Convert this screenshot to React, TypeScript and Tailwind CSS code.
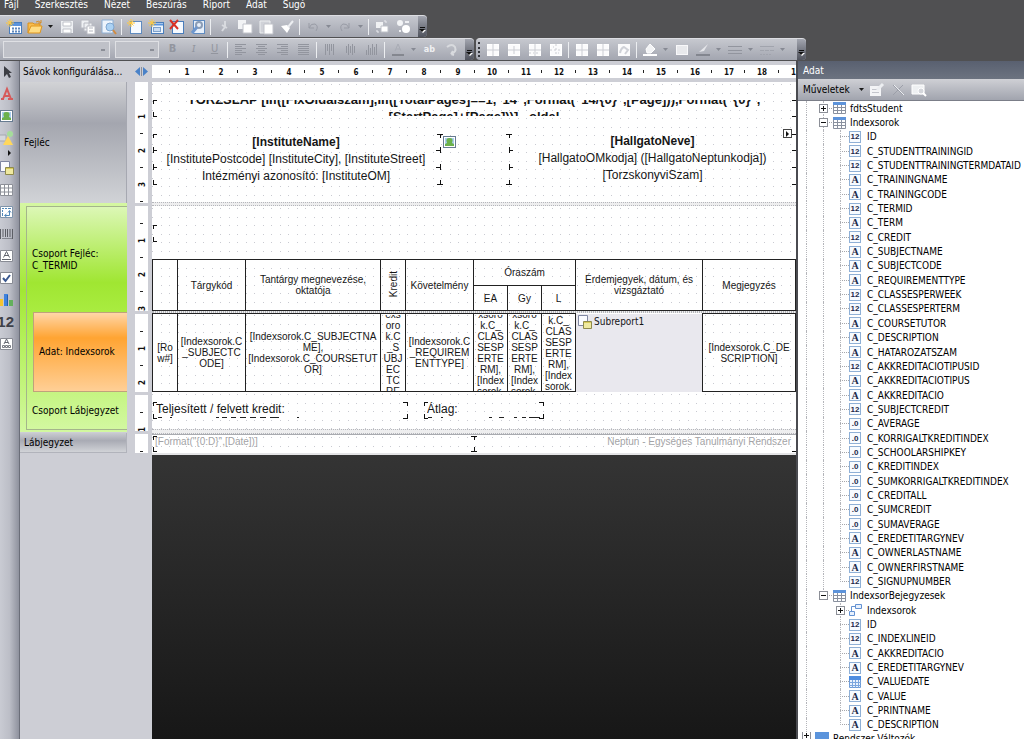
import type { ReactNode } from "react"

const ui = "font-['DejaVu_Sans_Condensed',Tahoma,sans-serif]"

const Svg = ({ children, size = 16 }: { children: ReactNode; size?: number }) => (
    <svg width={size} height={size} viewBox="0 0 16 16" fill="none" className="shrink-0">
        {children}
    </svg>
)

const Lines = ({ rows }: { rows: number[][] }) => (
    <Svg>
        {rows.map(([x, w], i) => (
            <rect key={i} x={x} y={2 + i * 2} width={w} height={1} fill="#92959e" />
        ))}
    </Svg>
)

const BorderGrid = ({ inner }: { inner: string }) => (
    <Svg>
        <rect x="2.5" y="2.5" width="11" height="11" fill="#fbfbfc" stroke="#fff" />
        <path d={inner} stroke="#cbcdd3" />
    </Svg>
)

const star = <path d="M4 0v8M0 4h8M1.5 1.5l5 5M6.5 1.5l-5 5" stroke="#ffc83d" />

const icons: Record<string, ReactNode> = {
    newReport: (
        <Svg>
            <rect x="3.5" y="3.5" width="12" height="11" fill="#fff" stroke="#4a7dbb" />
            <path d="M4 5.5h11" stroke="#5b94dc" strokeWidth="3" />
            <path d="M6 9.5h2M9 9.5h2M12 9.5h2M6 12.5h2M9 12.5h2M12 12.5h2" stroke="#5f88bd" strokeWidth="2" />
            {star}
        </Svg>
    ),
    open: (
        <Svg>
            <path d="M1 14V4h5l1 1h6v3" fill="#f7bd4f" stroke="#dc901b" />
            <path d="M1 14l3-7h11l-2 7z" fill="#ffdc82" stroke="#df951e" />
            <path d="M9 3q3-2 5 1m0-3v3h-3" stroke="#d68b20" />
        </Svg>
    ),
    save: (
        <Svg>
            <path d="M2 2h12v12H2z" fill="#eef0f3" />
            <path d="M4 3h8v4H4zM4 10h8v4H4z" fill="#fff" stroke="#bfc2c9" />
        </Svg>
    ),
    saveAll: (
        <Svg>
            <path d="M1 1h8v8H1zM4 4h8v8H4z" fill="#eef0f3" stroke="#b8bac2" />
            <path d="M7 7h8v8H7z" fill="#fff" stroke="#b8bac2" />
            <path d="M9 9h4M9 12h4" stroke="#b3b6bf" />
        </Svg>
    ),
    preview: (
        <Svg>
            <path d="M1 1h11v13H1z" fill="#edf4fc" stroke="#8eafd4" />
            <circle cx="9" cy="8" r="4" fill="#abd2f4" stroke="#7fa6d0" />
            <path d="M12 11l3 4" stroke="#d18b41" strokeWidth="2" />
        </Svg>
    ),
    newPage: (
        <Svg>
            <rect x="3.5" y="2.5" width="11" height="12" fill="#f6faff" stroke="#5f8bc0" />
            {star}
        </Svg>
    ),
    newForm: (
        <Svg>
            <rect x="3.5" y="3.5" width="12" height="11" fill="#eef5fd" stroke="#4a7dbb" />
            <path d="M4 5.5h11" stroke="#5b94dc" strokeWidth="2" />
            <rect x="5.5" y="8.5" width="7" height="4" fill="#c8dbf1" stroke="#7fa2cc" />
            {star}
        </Svg>
    ),
    deletePage: (
        <Svg>
            <rect x="3.5" y="2.5" width="11" height="12" fill="#f6faff" stroke="#4a7dbb" />
            <path d="M1 1l8 9M9 1L1 10" stroke="#d93025" strokeWidth="2" />
        </Svg>
    ),
    pageSetup: (
        <Svg>
            <rect x="3.5" y="1.5" width="11" height="13" fill="#e7f0fb" stroke="#5f8bc0" />
            <circle cx="9" cy="6" r="3" stroke="#8b9db6" strokeWidth="2" />
            <path d="M7 8l-5 6" stroke="#6d97cf" strokeWidth="3" />
        </Svg>
    ),
    cut: (
        <Svg>
            <path d="M9 2v6l-3 4M6 6l5 3" stroke="#d8dadf" strokeWidth="2" />
        </Svg>
    ),
    copy: (
        <Svg>
            <path d="M1 1h8v9H1z" fill="#f2f3f5" />
            <path d="M6 5h9v9H6z" fill="#fff" stroke="#c1c3ca" />
        </Svg>
    ),
    paste: (
        <Svg>
            <path d="M2 2h10v12H2z" fill="#d0d2d8" stroke="#eceef0" />
            <path d="M6 5h9v10H6z" fill="#fff" stroke="#c1c3ca" />
        </Svg>
    ),
    brush: (
        <Svg>
            <path d="M2 7l6-1 3 3-3 5z" fill="#fff" />
            <path d="M9 8l5-6" stroke="#eceef1" strokeWidth="2" />
        </Svg>
    ),
    undo: (
        <Svg>
            <path d="M4 4v5h5M4 9q2-5 6-4 4 2 1 7" stroke="#989ba5" />
        </Svg>
    ),
    redo: (
        <Svg>
            <path d="M12 4v5H7M12 9q-2-5-6-4-4 2-1 7" stroke="#989ba5" />
        </Svg>
    ),
    group: (
        <Svg>
            <path d="M2 3h7v6H2z" fill="#f0f1f3" />
            <path d="M7 7h7v6H7z" fill="#fff" stroke="#bdc0c7" />
            <path d="M10 2h2v2M3 11v2h2" stroke="#e9eaee" />
        </Svg>
    ),
    ungroup: (
        <Svg>
            <circle cx="5" cy="4" r="3" fill="#f3f4f6" />
            <circle cx="11" cy="10" r="4" fill="#fff" />
            <path d="M10 3h4M4 12h2" stroke="#eeeff2" strokeWidth="2" />
        </Svg>
    ),
    alignLeft: <Lines rows={[[2, 11], [2, 7], [2, 11], [2, 7], [2, 11], [2, 7]]} />,
    alignCenter: <Lines rows={[[2, 11], [4, 7], [2, 11], [4, 7], [2, 11], [4, 7]]} />,
    alignRight: <Lines rows={[[2, 11], [6, 7], [2, 11], [6, 7], [2, 11], [6, 7]]} />,
    justify: <Lines rows={[[2, 11], [2, 11], [2, 11], [2, 11], [2, 11], [2, 11]]} />,
    vTop: (
        <Svg>
            <path d="M3.5 2v11M5.5 2v7M7.5 2v11M9.5 2v7M11.5 2v11" stroke="#92959e" />
        </Svg>
    ),
    vMiddle: (
        <Svg>
            <path d="M3.5 4v7M5.5 2v11M7.5 4v7M9.5 2v11M11.5 4v7" stroke="#92959e" />
        </Svg>
    ),
    vBottom: (
        <Svg>
            <path d="M2.5 8v5M4.5 3v10M6.5 6v7M8.5 2v11M10.5 5v8M12.5 2v11" stroke="#92959e" />
        </Svg>
    ),
    fontColor: (
        <Svg>
            <path d="M5 9l3-7 3 7M6 7h4" stroke="#a9acb5" />
            <path d="M2 12h12v2H2z" fill="#84878f" />
        </Svg>
    ),
    rotate: (
        <Svg>
            <path d="M4 5q5-4 8 0 2 5-4 7m0 0l3 1m-3-1l2-3" stroke="#d8dade" strokeWidth="2" />
        </Svg>
    ),
    bAll: <BorderGrid inner="M8 2v12M2 8h12" />,
    bTop: <BorderGrid inner="M8 4v8M2 8h12" />,
    bDash: <BorderGrid inner="M2 8h12M8 2v12M2 11h2m2 0h1m2 0h2" />,
    bNone: <BorderGrid inner="M2 8h2m2 0h2m2 0h2M8 2v2m0 2v2m0 2v2M5 5h1M10 11h1" />,
    bSetup: (
        <Svg>
            <rect x="2" y="2" width="12" height="12" fill="#fbfbfc" />
            <path d="M4 11q1-5 4-6l4 3-3 4" stroke="#cfd1d7" strokeWidth="2" />
        </Svg>
    ),
    fill: (
        <Svg>
            <path d="M4 7l4-5 5 5-4 4H5z" fill="#f2f3f5" stroke="#fff" />
            <path d="M1 12h14v2H1z" fill="#fff" />
        </Svg>
    ),
    box: (
        <Svg>
            <rect x="2.5" y="3.5" width="11" height="9" fill="#e8e9ec" stroke="#f8f8fa" />
        </Svg>
    ),
    lineColor: (
        <Svg>
            <path d="M4 10l9-8-4 7z" fill="#e5e6ea" />
            <path d="M1 12h14v2H1z" fill="#83868f" />
        </Svg>
    ),
    lineWidth: (
        <Svg>
            <path d="M1 4.5h14M1 8.5h14M1 11.5h14" stroke="#92959e" />
        </Svg>
    ),
    lineStyle: (
        <Svg>
            <path d="M1 4.5h14M1 8.5h4m1 0h4m1 0h4M1 12.5h2m1 0h2m1 0h2m1 0h2" stroke="#a1a4ad" />
        </Svg>
    ),
    pointer: (
        <Svg>
            <path d="M6 2v11l3-3 2 4 2-1-2-4h3z" fill="#3c3e44" />
        </Svg>
    ),
    label: (
        <Svg>
            <path d="M3 13h3M10 13h5M5 13l4-10 4 10M6 10h5" stroke="#d65a5a" strokeWidth="2" />
        </Svg>
    ),
    picture: (
        <Svg>
            <rect x="2.5" y="2.5" width="12" height="11" fill="#fff" stroke="#677b91" />
            <path d="M4 4h9v8H4z" fill="#a9cef0" />
            <path d="M4 12v-2l2-1q-2-5 2.5-5t2.500 5l2 1v2z" fill="#6cb14c" />
        </Svg>
    ),
    shape: (
        <Svg>
            <circle cx="12" cy="4" r="3" fill="#a5dc9b" />
            <path d="M0 5h8v6H0z" fill="#d5d7dc" stroke="#a6a8b0" />
            <path d="M10 6l5 9H5z" fill="#ffd75c" />
        </Svg>
    ),
    subreport: (
        <Svg>
            <path d="M2.5 1.5h9v10h-9z" fill="#fafbff" stroke="#8087a2" />
            <path d="M7.5 7.500h8v7h-8z" fill="#efe9a0" stroke="#8f8a4c" />
            <path d="M8 8.5h7" stroke="#d8cb58" />
        </Svg>
    ),
    table: (
        <Svg>
            <path d="M2.5 2.5h12v11h-12zM2.5 6h12M2.5 10h12M6.5 2.5v11M10.5 2.5v11" fill="#fff" stroke="#8d9098" />
        </Svg>
    ),
    pivot: (
        <Svg>
            <path d="M2.5 2.5h12v11h-12z" fill="#fff" stroke="#7f94ab" />
            <path d="M4 4.5h2m1 0h2m1 0h3M4.5 6v2m0 1v3M7 11.5h4.500V7M10 8.500l1.500-2 1.500 2M8.500 10l-2 1.500 2 1.500" stroke="#4f86b8" />
        </Svg>
    ),
    barcode: (
        <Svg>
            <path d="M2.5 3v10M5 3v8M7.5 3v8M9.5 3v8M12 3v8M14.5 3v10" stroke="#5c5e65" />
            <path d="M4 12.5h10" stroke="#83868e" />
        </Svg>
    ),
    zip: (
        <Svg>
            <path d="M2.5 2.5h12v11h-12z" fill="#fff" stroke="#888b94" />
            <path d="M5.5 9.5l3-6 3 6M6.5 7.5h4M4 11.5h9" stroke="#62666f" />
        </Svg>
    ),
    check: (
        <Svg>
            <path d="M2.5 2.5h12v11h-12z" fill="#fff" stroke="#888b94" />
            <path d="M5 8l2.5 3L12 5" stroke="#39578f" strokeWidth="2" />
        </Svg>
    ),
    chart: (
        <Svg>
            <path d="M1 7h4v7H1z" fill="#f4c430" />
            <path d="M6 2h4v12H6z" fill="#3f82dd" />
            <path d="M11 8h4v6h-4z" fill="#63b05c" />
            <path d="M9.5 3v11" stroke="#225fb4" />
        </Svg>
    ),
    richText: (
        <Svg>
            <path d="M2.5 2.5h12v11h-12z" fill="#fff" stroke="#888b94" />
            <path d="M6 8l2.5-5L11 8M7 6.5h3" stroke="#62666f" />
            <path d="M4.5 9.5h2v2h-2zM7.5 9.5h2v2h-2zM10.5 9.5h2v2h-2z" stroke="#777a82" />
        </Svg>
    ),
    editItem: (
        <Svg>
            <path d="M1 4h11v10H1z" fill="#f3f4f6" />
            <path d="M3 7.5h7M3 10.5h7" stroke="#c3c5cc" />
            <path d="M8 8l6-6" stroke="#eceef1" strokeWidth="3" />
        </Svg>
    ),
    deleteItem: (
        <Svg>
            <path d="M3 3l10 10M13 3L3 13" stroke="#9c9fa9" />
            <path d="M4 3l10 10" stroke="#eceef1" />
        </Svg>
    ),
    viewItem: (
        <Svg>
            <path d="M1 3h12v9H1z" fill="#eef0f2" stroke="#fff" />
            <circle cx="10" cy="9" r="3" fill="#d5d7dc" stroke="#fff" />
            <path d="M12 11l3 3" stroke="#fff" strokeWidth="2" />
        </Svg>
    ),
}

const Tool = ({ name, label, text }: { name?: string; label: string; text?: ReactNode }) => (
    <button aria-label={label} className="flex h-full w-[21px] shrink-0 items-center justify-center text-[11px] text-[#92959e]">
        {name ? icons[name] : text}
    </button>
)

const Caret = ({ dark = false }: { dark?: boolean }) => (
    <span className="flex h-full w-[11px] shrink-0 items-center justify-center">
        <svg width="5" height="3" viewBox="0 0 5 3">
            <path d="M0 0h5L2.5 3z" fill={dark ? "#1a1a1a" : "#868993"} />
        </svg>
    </span>
)

const Sep = () => (
    <span className="flex h-full w-[5px] shrink-0 items-center justify-center">
        <span className="h-4 w-px bg-[#eceef1]" />
    </span>
)

const BarEnd = () => (
    <button aria-label="További gombok" className="ml-auto flex h-full w-[9px] items-end justify-center rounded-r bg-gradient-to-b from-[#a3a6b0] to-[#50535d] pb-1">
        <svg width="7" height="7" viewBox="0 0 7 7">
            <path d="M1 1.5h5" stroke="#111" />
            <path d="M1 4h6L4 7z" fill="#fff" />
            <path d="M0 3h6L3 6z" fill="#111" />
        </svg>
    </button>
)

// a string is an icon name; "|" is a separator, "v" an inactive arrow, "V" an active one
const Tools = ({ items }: { items: string[] }) => (
    <>
        {items.map((name, i) =>
            name === "|" ? <Sep key={i} /> : name === "v" || name === "V" ? <Caret key={i} dark={name === "V"} /> : <Tool key={i} name={name} label={name} />
        )}
    </>
)

const bar = "flex h-[22px] items-center bg-gradient-to-b from-[#c6c8cf] to-[#a3a6b0] border-t border-[#dcdde2]"
const combo = "h-[17px] appearance-none border border-[#dfe0e4] bg-[#bfc1c8] bg-[linear-gradient(#8b8e97,#8b8e97)] bg-[length:4px_2px] bg-[position:right_4px_center] bg-no-repeat"

const Toolbars = () => (
    <div className="flex flex-col gap-px">
        <div className={`${bar} w-[427px] max-w-full rounded-r pl-[3px]`}>
            <Tools items={["newReport", "open", "V", "save", "saveAll", "preview", "|", "newPage", "newForm", "deletePage", "pageSetup", "|", "cut", "copy", "paste", "brush", "|", "undo", "v", "redo", "v", "|", "group", "ungroup"]} />
            <BarEnd />
        </div>
        <div className="flex gap-0.5">
            <div className={`${bar} w-[474px] rounded-r pl-[3px]`}>
                <select aria-label="Betűtípus" disabled className={`${combo} mr-[5px] w-[107px]`} />
                <select aria-label="Betűméret" disabled className={`${combo} mr-[3px] w-[44px]`} />
                <Tool label="Félkövér" text={<b>B</b>} />
                <Tool label="Dőlt" text={<i className="font-serif">I</i>} />
                <Tool label="Aláhúzott" text={<u>U</u>} />
                <Tools items={["|", "alignLeft", "alignCenter", "alignRight", "justify", "|", "vTop", "vMiddle", "vBottom", "|", "fontColor", "v"]} />
                <Tool label="Kiemelés" text={<b className="text-[9px] text-[#eff0f2]">ab</b>} />
                <Tools items={["rotate"]} />
                <BarEnd />
            </div>
            <div className={`${bar} w-[330px] rounded`}>
                <span className="mx-0.5 h-[15px] border-l-2 border-dotted border-[#33353b]" />
                <Tools items={["bAll", "bTop", "bDash", "bNone", "|", "bAll", "bAll", "bSetup", "|", "fill", "v", "box", "lineColor", "v", "lineWidth", "v", "lineStyle", "v"]} />
                <BarEnd />
            </div>
        </div>
    </div>
)

const toolbox = ["pointer", "label", "picture", "shape", "more", "subreport", "table", "pivot", "barcode", "zip", "check", "chart", "num", "richText"]

const Toolbox = () => (
    <div className="flex w-5 shrink-0 flex-col overflow-hidden border-r border-[#6b6e79] bg-gradient-to-r from-[#c9cbd3] via-[#bcbec7] to-[#8f929e]">
        {toolbox.map((name) =>
            name === "more" ? (
                <button key={name} aria-label="További alakzatok" className="flex h-2 items-center justify-center">
                    <svg width="3" height="6" viewBox="0 0 3 6"><path d="M0 0l3 3-3 3z" fill="#111" /></svg>
                </button>
            ) : (
                <button key={name} aria-label={name} className="-ml-2 flex h-[22px] w-[22px] shrink-0 items-center justify-end">
                    {name === "num" ? <b className="font-['Liberation_Sans',sans-serif] text-[15px] text-[#3f4148]">12</b> : icons[name]}
                </button>
            )
        )}
    </div>
)

const Bands = () => (
    <div className="flex w-[107px] shrink-0 flex-col text-[10px] leading-3">
        <div className="flex h-[121px] items-center border-r border-[#a6a8b1] bg-[linear-gradient(#d2d3d6,#a4a6af_34%,#d1d3d7)] pl-1">Fejléc</div>
        <div className="flex h-[229px] flex-col bg-[linear-gradient(#d5f7a2,#a2e733_38%,#b4f05a_60%,#d2f8a0)] pt-[3px] pl-1.5">
            <div className="flex h-[224px] flex-col border border-r-0 border-[#a4b58b] bg-[linear-gradient(#dcf7b6,#a0e632_34%,#a9ec40_47%,#d2f8a0)] pl-[5px]">
                <div className="flex h-[105px] items-center">Csoport Fejléc:<br />C_TERMID</div>
                <div className="ml-px flex h-20 items-center border border-r-0 border-[#bfa27b] bg-[linear-gradient(#ffd6a8,#ffa432_32%,#ffcf96)] pl-[5px]">Adat: Indexsorok</div>
                <div className="flex flex-1 items-center">Csoport Lábjegyzet</div>
            </div>
        </div>
        <div className="mt-px flex h-5 items-center border-r border-b border-[#b1b3bb] bg-[linear-gradient(#c9cbd0,#a9abb4_40%,#d1d3d7)] pl-1">Lábjegyzet</div>
    </div>
)

const VRuler = ({ height, count }: { height: number; count: number }) => (
    <svg width="13" height={height} className="block bg-white">
        {Array.from({ length: count }, (_, i) => {
            const y = 17 + i * 17
            return i % 2 === 0 ? (
                <path key={i} d={`M5 ${y}.5h3`} stroke="#222" />
            ) : (
                <text key={i} transform={`translate(10 ${y + 3}) rotate(-90)`} fontSize="8" fontWeight="bold" fill="#111">
                    {(i + 1) / 2}
                </text>
            )
        })}
    </svg>
)

const HRuler = () => (
    <svg width="100%" height="13" className="block bg-white">
        {Array.from({ length: 19 }, (_, i) => {
            const x = 17 + Math.round((i * 677) / 20)
            return (
                <g key={i}>
                    <path d={`M${x}.5 5v3`} stroke="#222" />
                    <text x={x + 18} y="10" textAnchor="middle" fontSize="8" fontWeight="bold" fill="#111">{i + 1}</text>
                </g>
            )
        })}
    </svg>
)

type Mark = [number, number, string]

const shapes: Record<string, string> = {
    tl: "M4 0H0V4",
    tr: "M-4 0H0V4",
    bl: "M4 0H0V-4",
    br: "M-4 0H0V-4",
    l: "M0-3V3M0 0H4",
    r: "M0-3V3M0 0H-4",
    t: "M-3 0H3M0 0V4",
    b: "M-3 0H3M0 0V-4",
    e: "M-3 0H1",
}

const Marks = ({ items }: { items: Mark[] }) => (
    <svg className="pointer-events-none absolute inset-0 h-full w-full" shapeRendering="crispEdges">
        {items.map(([x, y, kind], i) => (
            <path key={i} d={shapes[kind]} transform={`translate(${x} ${y})`} stroke="#111" fill="none" />
        ))}
    </svg>
)

const Band = ({ className, children }: { className: string; children?: ReactNode }) => (
    <div className={`relative shrink-0 overflow-hidden bg-white ${className}`}>
        <svg className="absolute inset-0 h-full w-full" shapeRendering="crispEdges">
            <defs>
                <pattern id="dots" width="17" height="17" patternUnits="userSpaceOnUse">
                    <path d="M0 2.5h1M9 2.5h1M0 11.5h1M9 11.5h1" stroke="#c9cad1" />
                </pattern>
            </defs>
            <rect width="100%" height="100%" fill="url(#dots)" />
        </svg>
        {children}
    </div>
)

const Split = ({ className }: { className: string }) => (
    <div className={`shrink-0 border-y border-dotted border-[#b5b6bb] bg-[#eeeeef] ${className}`} />
)

const Cols = () => (
    <colgroup>
        <col className="w-[25px]" />
        <col className="w-[68px]" />
        <col className="w-[135px]" />
        <col className="w-[25px]" />
        <col className="w-[68px]" />
        <col className="w-[34px]" />
        <col className="w-[34px]" />
        <col className="w-[34px]" />
        <col className="w-[127px]" />
        <col />
    </colgroup>
)

const th = "border border-[#222] p-0 text-center align-middle font-normal"

const Clip = ({ lines, up }: { lines: string[]; up: string }) => (
    <div className="flex h-[76px] flex-col items-center overflow-hidden">
        <div className={up}>
            {lines.map((line, i) => <div key={i}>{line}</div>)}
        </div>
    </div>
)

const perTerm = ["xsoro", "k.C_", "CLAS", "SESP", "ERTE", "RM],", "[Index", "sorok."]

const Canvas = () => (
    <div className="flex min-w-0 flex-1 flex-col overflow-hidden font-['Liberation_Sans',Arial,sans-serif] text-[12px] text-[#161616]">
        <Band className="h-[120px]">
            <div className="absolute top-[18px] right-0 left-0 h-4 overflow-hidden text-center text-[13px] leading-[17px] font-bold whitespace-nowrap">
                <div className="-mt-[9px]">TÖRZSLAP [IIf([FixOldalszam],IIf([TotalPages]==1,"14",Format("14/{"{0}"}",[Page])),Format("{"{0}"}",</div>
                <div>[StartPage]+[Page]))] . oldal</div>
            </div>
            <div className="absolute top-[52px] left-0 w-[288px] text-center leading-[17px]">
                <b>[InstituteName]</b>
                <div>[InstitutePostcode] [InstituteCity], [InstituteStreet]</div>
                <div>Intézményi azonosító: [InstituteOM]</div>
            </div>
            <div className="absolute top-[52px] left-[289px]">{icons.picture}</div>
            <div className="absolute top-[51px] right-0 left-[357px] text-center leading-[17px]">
                <b>[HallgatoNeve]</b>
                <div>[HallgatoOMkodja] ([HallgatoNeptunkodja])</div>
                <div>[TorzskonyviSzam]</div>
            </div>
            <button aria-label="Mező műveletei" className="absolute top-[47px] right-1 flex h-[9px] w-[9px] items-center justify-center border border-[#444] bg-white">
                <svg width="3" height="6" viewBox="0 0 3 6"><path d="M0 0l3 3-3 3z" fill="#111" /></svg>
            </button>
            <Marks items={[[1, 18, "tl"], [1, 34, "bl"], [643, 18, "e"], [643, 34, "e"], [1, 52, "tl"], [1, 68, "l"], [1, 85, "l"], [1, 102, "bl"], [288, 52, "t"], [288, 68, "r"], [288, 85, "r"], [288, 102, "b"], [357, 52, "t"], [357, 68, "l"], [357, 85, "l"], [357, 102, "b"], [643, 52, "e"], [643, 68, "e"], [643, 85, "e"], [643, 102, "e"]]} />
        </Band>
        <Split className="h-1" />
        <Band className="h-[105px] pt-[53px]">
            <Marks items={[[1, 19, "tl"], [1, 35, "bl"]]} />
            <table className="relative w-full table-fixed border-collapse text-[10px] leading-[11px]">
                <Cols />
                <tbody>
                    <tr className="h-[26px]">
                        <th rowSpan={2} className={th} />
                        <th rowSpan={2} className={th}>Tárgykód</th>
                        <th rowSpan={2} className={th}>Tantárgy megnevezése,<br />oktatója</th>
                        <th rowSpan={2} className={th}><span className="inline-block rotate-180 [writing-mode:vertical-rl]">Kredit</span></th>
                        <th rowSpan={2} className={th}>Követelmény</th>
                        <th colSpan={3} className={th}>Óraszám</th>
                        <th rowSpan={2} className={th}>Érdemjegyek, dátum, és<br />vizsgáztató</th>
                        <th rowSpan={2} className={th}>Megjegyzés</th>
                    </tr>
                    <tr className="h-[25px]">
                        <th className={th}>EA</th>
                        <th className={th}>Gy</th>
                        <th className={th}>L</th>
                    </tr>
                </tbody>
            </table>
        </Band>
        <Split className="h-0.5" />
        <Band className="h-[79px]">
            <table className="relative w-full table-fixed border-collapse text-[10px] leading-[11px]">
                <Cols />
                <tbody>
                    <tr className="h-[78px]">
                        <td className={th}>[Ro<br />w#]</td>
                        <td className={th}>[Indexsorok.C<br />_SUBJECTC<br />ODE]</td>
                        <td className={th}>[Indexsorok.C_SUBJECTNA<br />ME],<br />[Indexsorok.C_COURSETUT<br />OR]</td>
                        <td className={th}><Clip up="-mt-[6px]" lines={["exs", "oro", "k.C", "_S", "UBJ", "EC", "TC", "RE"]} /></td>
                        <td className={th}>[Indexsorok.C<br />_REQUIREM<br />ENTTYPE]</td>
                        <td className={th}><Clip up="-mt-[6px]" lines={perTerm} /></td>
                        <td className={th}><Clip up="-mt-[6px]" lines={perTerm} /></td>
                        <td className={th}><Clip up="-mt-[11px]" lines={perTerm} /></td>
                        <td className="bg-[#e9e8ee] p-0 align-top">
                            <div className={`flex items-center gap-0.5 ${ui}`}>{icons.subreport}Subreport1</div>
                        </td>
                        <td className={th}>[Indexsorok.C_DE<br />SCRIPTION]</td>
                    </tr>
                </tbody>
            </table>
        </Band>
        <Band className="h-[37px]">
            <div className="absolute top-2.5 left-1 h-4 overflow-hidden leading-[14px]">Teljesített / felvett kredit:</div>
            <div className="absolute top-2.5 left-[275px] h-4 overflow-hidden leading-[14px]">Átlag:</div>
            <svg className="absolute inset-0 h-full w-full">
                <path d="M6 25.5h4M18 25.5h2M64 25.5h3M70 25.5h5M79 25.5h5M88 25.5h6M98 25.5h6M108 25.5h6M118 25.5h9M145 25.5h2M276 25.5h4M289 25.5h2M337 25.5h3M347 25.5h5M362 25.5h3M370 25.5h4M377 25.5h11" stroke="#222" />
            </svg>
            <Marks items={[[1, 10, "tl"], [1, 26, "bl"], [255, 10, "tr"], [255, 26, "br"], [272, 10, "tl"], [272, 26, "bl"], [391, 10, "tr"], [391, 26, "br"]]} />
        </Band>
        <Split className="h-[5px]" />
        <Band className="h-[19px] border-t border-[#a9abb0]">
            <div className="relative flex justify-between pr-[5px] pl-[3px] text-[10px] leading-[13px] text-[#a3a3a6]">
                <span>[Format("{"{0:D}"}",[Date])]</span>
                <span>Neptun - Egységes Tanulmányi Rendszer</span>
            </div>
            <Marks items={[[1, 1, "tl"], [1, 16, "bl"], [322, 1, "t"], [322, 16, "b"], [643, 16, "e"]]} />
        </Band>
        <div className="h-0.5 shrink-0 bg-[#e4e4e6]" />
        <div className="flex-1 bg-[linear-gradient(#343434,#171717)]" />
    </div>
)

const Designer = () => (
    <div className="flex min-w-0 flex-1 flex-col bg-[#cdced5]">
        <div className="flex h-[21px] shrink-0 items-center">
            <button className="w-[115px] shrink-0 pl-[3px] text-left text-[10px] whitespace-nowrap">Sávok konfigurálása...</button>
            <button aria-label="Sávok szélessége" className="w-[17px] shrink-0">
                <svg width="13" height="9" viewBox="0 0 13 9">
                    <path d="M5 0v9L0 4.5zM8 0v9l5-4.500z" fill="#4a82c8" />
                    <path d="M6.5 0v9" stroke="#8c8f99" />
                </svg>
            </button>
            <div className="min-w-0 flex-1"><HRuler /></div>
        </div>
        <div className="flex min-h-0 flex-1">
            <Bands />
            <div className="flex w-[25px] shrink-0 flex-col gap-[3px] pl-2 font-bold">
                <VRuler height={121} count={7} />
                <VRuler height={105} count={6} />
                <VRuler height={78} count={4} />
                <VRuler height={36} count={2} />
                <VRuler height={19} count={1} />
            </div>
            <Canvas />
        </div>
    </div>
)

const TableIcon = () => (
    <svg width="13" height="12" viewBox="0 0 13 12" className="shrink-0">
        <path d="M.5.5h12v11H.5zM.5 5.5h12M.5 8.5h12M4.5 3v8M8.5 3v8" fill="#fff" stroke="#8a919f" />
        <path d="M0 0h13v3H0z" fill="#5d93da" />
    </svg>
)

const FieldIcon = ({ kind }: { kind: string }) => {
    if (kind === "date")
        return (
            <svg width="12" height="12" viewBox="0 0 12 12" className="shrink-0">
                <path d="M.5.5h11v11H.5z" fill="#eaf2fd" stroke="#6e9bd6" />
                <path d="M0 0h12v4H0z" fill="#4f8de0" />
                <path d="M0 6.5h12M0 9.5h12M3.5 4v8M6.5 4v8M9.5 4v8" stroke="#7ba6de" />
            </svg>
        )
    if (kind === "link")
        return (
            <svg width="13" height="12" viewBox="0 0 13 12" className="shrink-0">
                <path d="M6.5.5h6v4h-6zM.5 7.5h5v4h-5z" fill="#e8f1fd" stroke="#6492d2" />
                <path d="M2.5 7V2.5H6" fill="none" stroke="#6492d2" />
            </svg>
        )
    return (
        <span className={`flex h-3 w-3 shrink-0 items-center justify-center border border-[#8fb0d6] bg-[#f7fbff] font-bold text-[#1d2a4a] ${kind === "A" ? "font-['Liberation_Serif',serif] text-[10px]" : "font-['Liberation_Sans',sans-serif] text-[8px]"}`}>
            {kind}
        </span>
    )
}

const indexFields = [
    ["12", "ID"],
    ["12", "C_STUDENTTRAININGID"],
    ["12", "C_STUDENTTRAININGTERMDATAID"],
    ["A", "C_TRAININGNAME"],
    ["A", "C_TRAININGCODE"],
    ["12", "C_TERMID"],
    ["A", "C_TERM"],
    ["12", "C_CREDIT"],
    ["A", "C_SUBJECTNAME"],
    ["A", "C_SUBJECTCODE"],
    ["A", "C_REQUIREMENTTYPE"],
    ["12", "C_CLASSESPERWEEK"],
    ["12", "C_CLASSESPERTERM"],
    ["A", "C_COURSETUTOR"],
    ["A", "C_DESCRIPTION"],
    ["A", "C_HATAROZATSZAM"],
    ["12", "C_AKKREDITACIOTIPUSID"],
    ["A", "C_AKKREDITACIOTIPUS"],
    ["A", "C_AKKREDITACIO"],
    ["12", "C_SUBJECTCREDIT"],
    [".0", "C_AVERAGE"],
    [".0", "C_KORRIGALTKREDITINDEX"],
    [".0", "C_SCHOOLARSHIPKEY"],
    [".0", "C_KREDITINDEX"],
    [".0", "C_SUMKORRIGALTKREDITINDEX"],
    [".0", "C_CREDITALL"],
    [".0", "C_SUMCREDIT"],
    [".0", "C_SUMAVERAGE"],
    ["A", "C_EREDETITARGYNEV"],
    ["A", "C_OWNERLASTNAME"],
    ["A", "C_OWNERFIRSTNAME"],
    ["12", "C_SIGNUPNUMBER"],
]

const entryFields = [
    ["link", "Indexsorok"],
    ["12", "ID"],
    ["12", "C_INDEXLINEID"],
    ["A", "C_AKKREDITACIO"],
    ["A", "C_EREDETITARGYNEV"],
    ["date", "C_VALUEDATE"],
    ["A", "C_VALUE"],
    ["A", "C_PRINTNAME"],
    ["A", "C_DESCRIPTION"],
]

// one 17px step of the tree: dotted guide, optional stub to the right, optional +/- box
const Guide = ({ line = true, half = false, stub = false, box }: { line?: boolean; half?: boolean; stub?: boolean; box?: string }) => (
    <span className="relative flex w-[17px] shrink-0 items-center self-stretch">
        {line && <span className={`absolute top-0 left-2 border-l border-dotted border-[#b4b5ba] ${half ? "h-1/2" : "h-full"}`} />}
        {stub && <span className="ml-2 w-[9px] border-t border-dotted border-[#a5a6ab]" />}
        {box && (
            <button aria-label={box === "+" ? "Kibontás" : "Összecsukás"} className="absolute left-1 flex h-[9px] w-[9px] items-center justify-center border border-[#8c8f97] bg-white">
                <svg width="5" height="5" viewBox="0 0 5 5"><path d={box === "+" ? "M0 2.5h5M2.5 0v5" : "M0 2.5h5"} stroke="#111" /></svg>
            </button>
        )}
    </span>
)

const Row = ({ children }: { children: ReactNode }) => <li className="flex min-h-0 flex-1 items-center whitespace-nowrap">{children}</li>

const Parent = ({ box, name, last = false }: { box: string; name: string; last?: boolean }) => (
    <Row>
        <Guide />
        <Guide stub box={box} half={last} />
        <span className="mr-[4px] ml-px"><TableIcon /></span>
        {name}
    </Row>
)

const Fields = ({ rows, guide }: { rows: string[][]; guide: boolean }) => (
    <>
        {rows.map(([kind, name], i) => (
            <Row key={name}>
                <Guide />
                <Guide line={guide} />
                <Guide stub half={i === rows.length - 1} box={kind === "link" ? "+" : undefined} />
                <span className="flex w-[18px]"><FieldIcon kind={kind} /></span>
                {name}
            </Row>
        ))}
    </>
)

const DataPanel = () => (
    <aside className="flex w-[228px] shrink-0 flex-col border-l-2 border-[#4a4b50] bg-white text-[10px]">
        <h2 className="flex h-[18px] shrink-0 items-center bg-gradient-to-b from-[#596070] to-[#6c7380] pl-[5px] text-white">Adat</h2>
        <div className="flex h-[22px] shrink-0 items-center border-b border-[#7b7e88] bg-gradient-to-b from-[#cfd0d5] to-[#a1a4ae] pl-[5px]">
            <button className="flex items-center gap-1.5">Műveletek<Caret dark /></button>
            <span className="flex h-full"><Tools items={["editItem", "deleteItem", "viewItem"]} /></span>
        </div>
        <ul className="flex min-h-0 flex-1 flex-col leading-[13px]">
            <Parent box="+" name="fdtsStudent" />
            <Parent box="-" name="Indexsorok" />
            <Fields rows={indexFields} guide />
            <Parent box="-" name="IndexsorBejegyzesek" last />
            <Fields rows={entryFields} guide={false} />
        </ul>
        <div className="flex h-[7px] shrink-0 items-start overflow-hidden leading-[13px]">
            <Guide box="+" />
            <span className="mr-1 h-3 w-3.5 shrink-0 bg-[#5b94dc]" />
            Rendszer Változók
        </div>
    </aside>
)

export default function App() {
    return (
        <div className={`flex h-screen flex-col overflow-hidden bg-[#505052] text-[10px] text-black ${ui}`}>
            <nav className="flex h-[15px] shrink-0 items-start gap-4 pl-1 text-[10px] leading-[10px] text-white">
                {["Fájl", "Szerkesztés", "Nézet", "Beszúrás", "Riport", "Adat", "Sugó"].map((item) => (
                    <button key={item}>{item}</button>
                ))}
            </nav>
            <Toolbars />
            <div className="mt-px flex min-h-0 flex-1">
                <Toolbox />
                <Designer />
                <DataPanel />
            </div>
        </div>
    )
}
